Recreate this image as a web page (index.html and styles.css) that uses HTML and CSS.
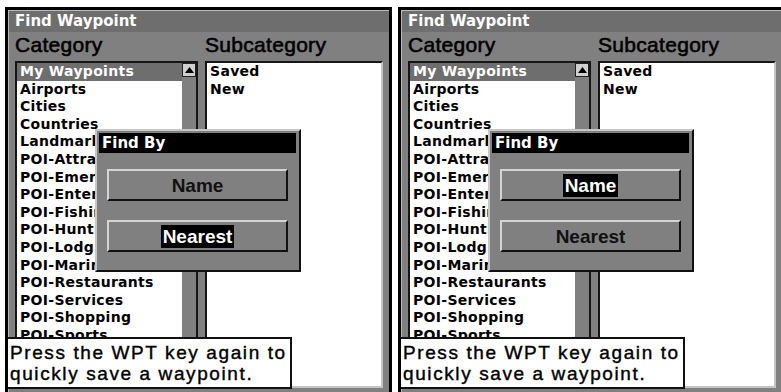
FILE: index.html
```html
<!DOCTYPE html>
<html>
	<head>
		<title>Find Waypoint</title>
		<link rel="stylesheet" href="styles.css">
	</head>
	<body>
		<div class="page">

			<!-- screen 1: "Nearest" selected -->
			<div class="screen">
				<div class="titlebar">Find Waypoint</div>
				<div class="columns">
					<div class="col-head">Category</div>
					<div class="col-head">Subcategory</div>
					<div class="listbox category">
						<ul class="items">
							<li class="current">My Waypoints</li>
							<li>Airports</li>
							<li>Cities</li>
							<li>Countries</li>
							<li>Landmarks</li>
							<li>POI-Attractions</li>
							<li>POI-Emergency</li>
							<li>POI-Entertainment</li>
							<li>POI-Fishing</li>
							<li>POI-Hunting</li>
							<li>POI-Lodging</li>
							<li>POI-Marinas</li>
							<li>POI-Restaurants</li>
							<li>POI-Services</li>
							<li>POI-Shopping</li>
							<li>POI-Sports</li>
						</ul>
						<div class="scrollbar">
							<div class="scroll-up">
								<svg width="9" height="6" viewBox="0 0 9 6"><polygon points="4.5,0 9,6 0,6" fill="#000"/></svg>
							</div>
						</div>
					</div>
					<div class="listbox sub">
						<ul class="items">
							<li>Saved</li>
							<li>New</li>
						</ul>
					</div>
				</div>

				<div class="findby">
					<div class="findby-title">Find By</div>
					<div class="choice"><span>Name</span></div>
					<div class="choice second"><span class="on">Nearest</span></div>
				</div>

				<div class="hint">Press the WPT key again to<br>quickly save a waypoint.</div>
			</div>

			<!-- screen 2: "Name" selected -->
			<div class="screen">
				<div class="titlebar">Find Waypoint</div>
				<div class="columns">
					<div class="col-head">Category</div>
					<div class="col-head">Subcategory</div>
					<div class="listbox category">
						<ul class="items">
							<li class="current">My Waypoints</li>
							<li>Airports</li>
							<li>Cities</li>
							<li>Countries</li>
							<li>Landmarks</li>
							<li>POI-Attractions</li>
							<li>POI-Emergency</li>
							<li>POI-Entertainment</li>
							<li>POI-Fishing</li>
							<li>POI-Hunting</li>
							<li>POI-Lodging</li>
							<li>POI-Marinas</li>
							<li>POI-Restaurants</li>
							<li>POI-Services</li>
							<li>POI-Shopping</li>
							<li>POI-Sports</li>
						</ul>
						<div class="scrollbar">
							<div class="scroll-up">
								<svg width="9" height="6" viewBox="0 0 9 6"><polygon points="4.5,0 9,6 0,6" fill="#000"/></svg>
							</div>
						</div>
					</div>
					<div class="listbox sub">
						<ul class="items">
							<li>Saved</li>
							<li>New</li>
						</ul>
					</div>
				</div>

				<div class="findby">
					<div class="findby-title">Find By</div>
					<div class="choice"><span class="on">Name</span></div>
					<div class="choice second"><span>Nearest</span></div>
				</div>

				<div class="hint">Press the WPT key again to<br>quickly save a waypoint.</div>
			</div>

		</div>
	</body>
</html>
```

FILE: styles.css
```css
body {
	margin: 0;
	background: #fff;
	overflow: hidden;
}

.page {
	display: flex;
	gap: 6px;
	padding: 7px 0 0 5px;
}

.screen {
	position: relative;
	flex: none;
	width: 387px;
	height: 385px;
	box-sizing: border-box;
	border: 3px solid #000;
	border-bottom: 0;
	padding: 1px 0 0 1px;
	background: #808080;
	box-shadow: inset 1px 1px 0 #b8b8b8;
	overflow: hidden;
}

.titlebar {
	height: 21px;
	padding-left: 6px;
	background: #6e6e6e;
	color: #fff;
	font: bold 15px/21px "DejaVu Sans", sans-serif;
}

.columns {
	display: grid;
	grid-template-columns: 183px 178px;
	grid-template-rows: 29px 327px;
	column-gap: 7px;
	padding-left: 6px;
}

.col-head {
	color: #000;
	font: 21px/26px "Liberation Sans", Arial, sans-serif;
	letter-spacing: 0.3px;
	-webkit-text-stroke: 0.6px #000;
}

.listbox {
	box-sizing: border-box;
	background: #fff;
	border: 2px solid #161616;
	overflow: hidden;
}

.listbox.sub {
	border-right-color: #c4c4c4;
	border-bottom-color: #c4c4c4;
}

.category {
	display: flex;
}

.items {
	flex: 1;
	margin: 0;
	padding: 0;
	list-style: none;
	color: #000;
	font: bold 14px/17.6px "DejaVu Sans", sans-serif;
	letter-spacing: 0.3px;
}

.items li {
	padding-left: 3px;
	white-space: nowrap;
}

.items li.current {
	background: #6e6e6e;
	color: #fff;
}

.scrollbar {
	width: 14px;
	background: #808080;
}

.scroll-up {
	display: flex;
	align-items: center;
	justify-content: center;
	height: 14px;
	box-sizing: border-box;
	background: #d0d0d0;
	border: 1px solid #222;
}

.findby {
	position: absolute;
	left: 87px;
	top: 119px;
	width: 206px;
	height: 143px;
	box-sizing: border-box;
	padding: 2px 3px 0 2px;
	background: #808080;
	border: 2px solid;
	border-color: #c8c8c8 #111 #111 #c8c8c8;
}

.findby-title {
	height: 20px;
	padding-left: 3px;
	background: #000;
	color: #fff;
	font: bold 15px/20px "DejaVu Sans", sans-serif;
}

.choice {
	display: flex;
	align-items: center;
	justify-content: center;
	width: 181px;
	height: 32px;
	box-sizing: border-box;
	margin: 16px 0 0 8px;
	border: 2px solid;
	border-color: #d4d4d4 #111 #111 #d4d4d4;
	color: #111;
	font: bold 19px "Liberation Sans", Arial, sans-serif;
}

.choice.second {
	margin-top: 19px;
}

.choice span {
	padding: 0 2px;
	line-height: 23px;
}

.choice span.on {
	background: #000;
	color: #fff;
}

.hint {
	position: absolute;
	left: 0;
	top: 327px;
	width: 284px;
	height: 52px;
	box-sizing: border-box;
	padding: 3px 0 0 2px;
	background: #fff;
	border: 2px solid #111;
	border-left: 0;
	color: #000;
	font: 19px/21px "Liberation Sans", Arial, sans-serif;
	letter-spacing: 1.6px;
	-webkit-text-stroke: 0.4px #000;
	white-space: nowrap;
}
```
